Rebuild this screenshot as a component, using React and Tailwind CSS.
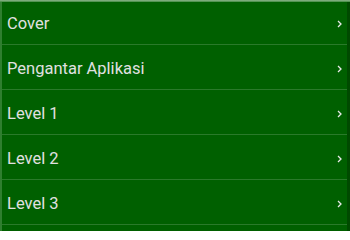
import React from 'react';

const items = ['Cover', 'Pengantar Aplikasi', 'Level 1', 'Level 2', 'Level 3'];

function Chevron() {
  return (
    <svg width="5" height="8" viewBox="0 0 5 8" className="shrink-0">
      <polyline points="1,1 4,4 1,7" fill="none" stroke="#e8e8e8" strokeWidth="1.3" />
    </svg>
  );
}

export default function App() {
  return (
    <div className="relative w-[350px] h-[231px] overflow-hidden bg-[#006000] flex font-['Roboto',sans-serif]">
      {/* top highlight edge */}
      <div className="absolute top-0 left-0 right-0 h-[2px] bg-gradient-to-b from-[#8fb58f] to-[#3f8a3f]" />
      <div className="w-[2px] shrink-0 bg-[#2f7f2f]" />
      <div className="flex-1 flex flex-col">
        {items.map((label) => (
          <div key={label} className="h-[45px] shrink-0 flex flex-col">
            <div className="flex-1 flex items-center justify-between pl-[5px] pr-[5px] pt-[4px]">
              <span className="text-[16.5px] text-[#e0e0e0] leading-none">{label}</span>
              <Chevron />
            </div>
            <div className="h-px bg-[#2a7a2a]" />
          </div>
        ))}
        <div className="flex-1" />
      </div>
      <div className="w-[3px] shrink-0 bg-[#004a00]" />
    </div>
  );
}
